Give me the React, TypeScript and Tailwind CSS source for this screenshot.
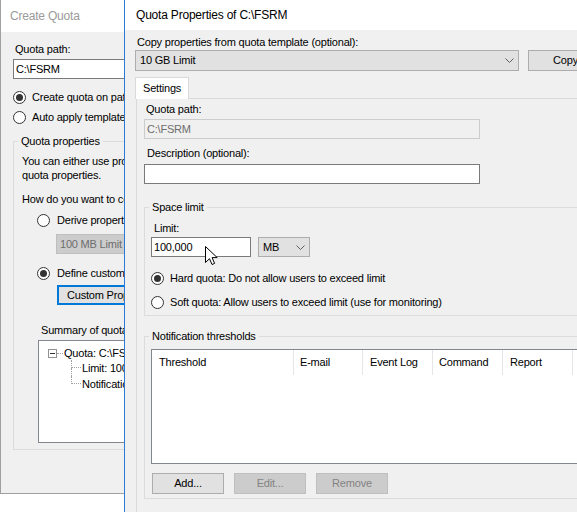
import React from "react";

function Radio({ checked = false }: { checked?: boolean }) {
  return (
    <span className="flex h-[13px] w-[13px] shrink-0 items-center justify-center rounded-full border border-[#333333] bg-white">
      {checked && <span className="h-[7px] w-[7px] rounded-full bg-[#333333]" />}
    </span>
  );
}

function Chevron() {
  return (
    <svg width="9" height="5" viewBox="0 0 9 5" className="shrink-0">
      <path d="M0.5 0.5 L4.5 4.5 L8.5 0.5" fill="none" stroke="#606060" strokeWidth="1" />
    </svg>
  );
}

function TreeChild({ last = false, children }: { last?: boolean; children: React.ReactNode }) {
  return (
    <div className="flex h-[16px]">
      <div className="flex w-[10px] shrink-0 flex-col">
        <div className="h-[8px] border-b border-l border-dotted border-[#a0a0a0]" />
        {!last && <div className="flex-1 border-l border-dotted border-[#a0a0a0]" />}
      </div>
      <span className="ml-[1px] leading-[16px]">{children}</span>
    </div>
  );
}

function LeftWindow() {
  return (
    <div className="w-[124px] shrink-0 overflow-hidden">
      <div className="flex h-[494px] w-[360px] flex-col border-b border-l border-[#a0a0a0] bg-[#f0f0f0]">
        <div className="flex h-[32px] shrink-0 items-center bg-white pl-[9px] text-[12px] text-[#9a9a9a]">
          Create Quota
        </div>
        <div className="flex flex-col pl-[12px]">
          <div className="mt-[10px] pl-[2px] leading-[14px]">Quota path:</div>
          <div className="mt-[3px] flex h-[20px] w-[320px] items-center border border-[#7a7a7a] bg-white pl-[2px]">
            C:\FSRM
          </div>
          <div className="mt-[10px] flex h-[16px] items-center gap-[6px]">
            <Radio checked />
            <span>Create quota on path</span>
          </div>
          <div className="mt-[4px] flex h-[16px] items-center gap-[6px]">
            <Radio />
            <span>Auto apply template and create quotas on existing and new subfolders</span>
          </div>

          <fieldset className="mt-[9px] w-[340px] border border-[#dcdcdc] pb-[6px]">
            <legend className="ml-[4px] px-[3px] leading-[14px]">Quota properties</legend>
            <div className="flex flex-col pl-[8px]">
              <div className="mt-[6px] leading-[14px]">
                You can either use properties from a quota template or define custom
              </div>
              <div className="leading-[14px]">quota properties.</div>
              <div className="mt-[10px] leading-[14px]">How do you want to configure quota properties?</div>
              <div className="ml-[15px] mt-[6px] flex h-[16px] items-center gap-[7px]">
                <Radio />
                <span>Derive properties from this quota template (recommended):</span>
              </div>
              <div className="ml-[34px] mt-[6px] flex h-[20px] w-[220px] items-center border border-[#bfbfbf] bg-[#cccccc] pl-[3px] text-[#6d6d6d]">
                100 MB Limit
              </div>
              <div className="ml-[15px] mt-[11px] flex h-[16px] items-center gap-[7px]">
                <Radio checked />
                <span>Define custom quota properties</span>
              </div>
              <div className="ml-[35px] mt-[4px] flex h-[20px] w-[120px] items-center border-2 border-[#0078d7] bg-[#e1e1e1] pl-[8px]">
                Custom Properties...
              </div>
              <div className="ml-[19px] mt-[18px] leading-[14px]">Summary of quota properties:</div>
              <div className="ml-[16px] mt-[3px] flex h-[103px] w-[260px] flex-col border border-[#828790] bg-white">
                <div className="mt-[5px] flex h-[14px] items-center pl-[9px]">
                  <span className="flex h-[9px] w-[9px] shrink-0 items-center justify-center border border-[#919191] bg-white">
                    <span className="h-px w-[5px] bg-[#333333]" />
                  </span>
                  <span className="w-[6px] shrink-0 border-t border-dotted border-[#a0a0a0]" />
                  <span className="ml-[1px]">Quota: C:\FSRM</span>
                </div>
                <div className="ml-[32px] flex flex-col">
                  <TreeChild>Limit: 100 MB (Hard)</TreeChild>
                  <TreeChild last>Notifications: 0</TreeChild>
                </div>
              </div>
            </div>
          </fieldset>
        </div>
      </div>
    </div>
  );
}

function RightWindow() {
  const cols = [
    { name: "Threshold", w: "w-[142px]", pl: "pl-[7px]" },
    { name: "E-mail", w: "w-[69px]", pl: "pl-[6px]" },
    { name: "Event Log", w: "w-[70px]", pl: "pl-[7px]" },
    { name: "Command", w: "w-[70px]", pl: "pl-[6px]" },
    { name: "Report", w: "w-[70px]", pl: "pl-[7px]" },
  ];

  return (
    <div className="flex w-[453px] shrink-0 flex-col overflow-hidden border-l border-[#2b7bd6] bg-[#f0f0f0]">
      <div className="flex h-[30px] shrink-0 items-center bg-white pl-[11px] text-[12px]">
        Quota Properties of C:\FSRM
      </div>
      <div className="flex flex-col pl-[10px]">
        <div className="ml-[2px] mt-[5px] leading-[14px]">Copy properties from quota template (optional):</div>
        <div className="mt-[1px] flex gap-[9px]">
          <div className="flex h-[21px] w-[384px] shrink-0 items-center justify-between border border-[#adadad] bg-[#e1e1e1] pl-[4px] pr-[4px]">
            <span>10 GB Limit</span>
            <Chevron />
          </div>
          <div className="flex h-[21px] w-[75px] shrink-0 items-center justify-center border border-[#adadad] bg-[#e1e1e1]">
            Copy
          </div>
        </div>

        <div className="mt-[6px] flex">
          <div className="relative z-10 -mb-px flex h-[22px] w-[54px] items-center border border-b-0 border-[#d9d9d9] bg-white pl-[7px]">
            Settings
          </div>
        </div>
        <div className="ml-[1px] w-[520px] border border-[#d9d9d9] pb-[20px] pl-[7px]">
          <div className="ml-[2px] mt-[3px] leading-[14px]">Quota path:</div>
          <div className="mt-[3px] flex h-[20px] w-[336px] items-center border border-[#cccccc] bg-[#f0f0f0] pl-[2px] text-[#6d6d6d]">
            C:\FSRM
          </div>
          <div className="ml-[3px] mt-[7px] leading-[14px]">Description (optional):</div>
          <div className="mt-[4px] h-[20px] w-[336px] border border-[#7a7a7a] bg-white" />

          <fieldset className="mt-[16px] w-[500px] border border-[#dcdcdc] pb-[5px]">
            <legend className="ml-[4px] px-[3px] leading-[14px]">Space limit</legend>
            <div className="flex flex-col pl-[6px]">
              <div className="ml-[3px] mt-[7px] leading-[14px]">Limit:</div>
              <div className="mt-[2px] flex gap-[7px]">
                <div className="flex h-[20px] w-[100px] items-center border border-[#7a7a7a] bg-white pl-[2px]">
                  100,000
                </div>
                <div className="flex h-[20px] w-[52px] items-center justify-between border border-[#adadad] bg-[#e1e1e1] pl-[4px] pr-[4px]">
                  <span>MB</span>
                  <Chevron />
                </div>
              </div>
              <div className="mt-[13px] flex h-[16px] items-center gap-[6px]">
                <Radio checked />
                <span>Hard quota: Do not allow users to exceed limit</span>
              </div>
              <div className="mt-[8px] flex h-[16px] items-center gap-[6px]">
                <Radio />
                <span>Soft quota: Allow users to exceed limit (use for monitoring)</span>
              </div>
            </div>
          </fieldset>

          <fieldset className="mt-[13px] w-[500px] border border-[#dcdcdc] pb-[4px]">
            <legend className="ml-[4px] px-[3px] leading-[14px]">Notification thresholds</legend>
            <div className="flex flex-col pl-[6px]">
              <div className="mt-[6px] flex h-[115px] w-[480px] flex-col border border-[#828790] bg-white">
                <div className="flex h-[25px]">
                  {cols.map((c) => (
                    <div
                      key={c.name}
                      className={`${c.w} ${c.pl} flex shrink-0 items-center border-r border-[#e5e5e5]`}
                    >
                      {c.name}
                    </div>
                  ))}
                </div>
              </div>
              <div className="ml-[1px] mt-[9px] flex gap-[10px]">
                <div className="flex h-[21px] w-[72px] items-center justify-center border border-[#adadad] bg-[#e1e1e1]">
                  Add...
                </div>
                <div className="flex h-[21px] w-[72px] items-center justify-center border border-[#bfbfbf] bg-[#cccccc] text-[#838383]">
                  Edit...
                </div>
                <div className="flex h-[21px] w-[72px] items-center justify-center border border-[#bfbfbf] bg-[#cccccc] text-[#838383]">
                  Remove
                </div>
              </div>
            </div>
          </fieldset>
        </div>
      </div>
    </div>
  );
}

export default function App() {
  return (
    <div className="relative flex h-[512px] w-[577px] overflow-hidden whitespace-nowrap bg-white font-['Liberation_Sans',Arial,sans-serif] text-[11px] tracking-[-0.2px] text-black">
      <LeftWindow />
      <RightWindow />
      {/* mouse pointer over the limit box */}
      <svg
        width="13"
        height="20"
        viewBox="0 0 13 20"
        className="pointer-events-none absolute left-[205px] top-[246px]"
      >
        <path
          d="M0.5 0.5 L0.5 16.5 L4.5 12.7 L7 18.5 L9.6 17.4 L7.1 11.6 L12.2 11.6 Z"
          fill="white"
          stroke="black"
          strokeWidth="1"
          strokeLinejoin="round"
        />
      </svg>
    </div>
  );
}
